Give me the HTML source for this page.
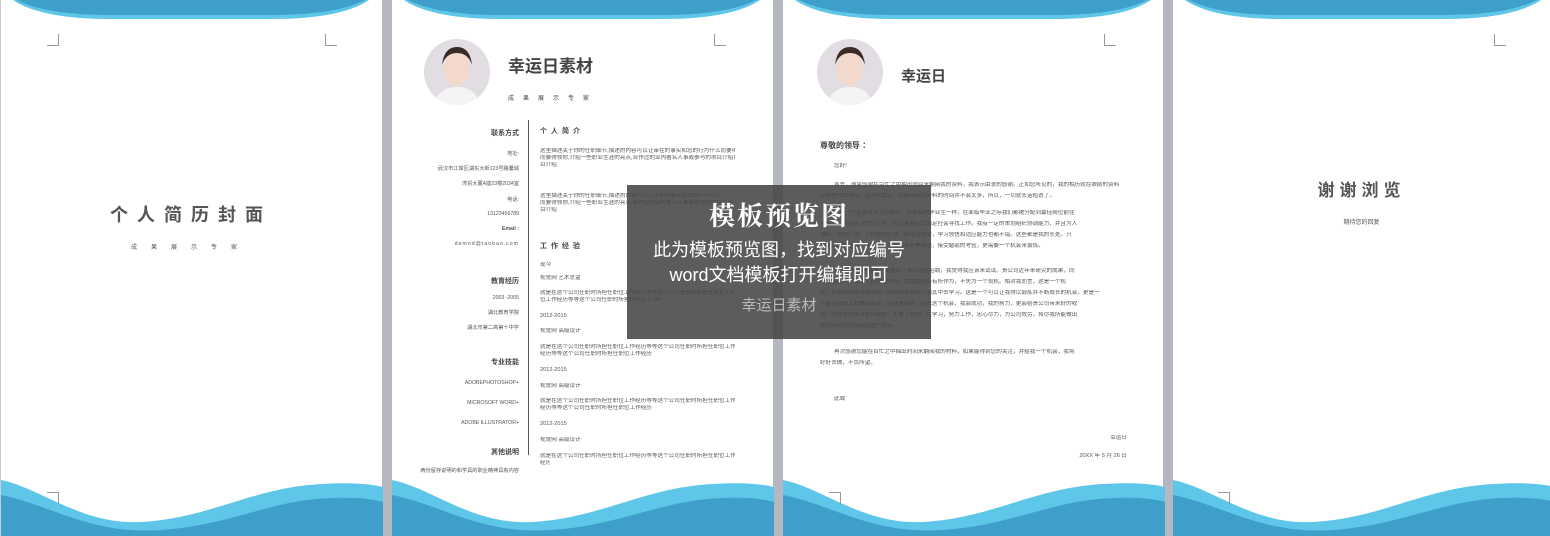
<!DOCTYPE html>
<html><head><meta charset="utf-8">
<style>
*{margin:0;padding:0;box-sizing:border-box}
body{width:1550px;height:536px;overflow:hidden;background:#b4b7bf;position:relative;font-family:"Liberation Sans","Noto Sans CJK SC",sans-serif}
.pg{position:absolute;top:0;height:536px;background:#fff;overflow:hidden}
.a{position:absolute;white-space:nowrap;color:#555}
.s{font-size:5.2px;color:#555}
.l{position:absolute;white-space:nowrap;overflow:hidden;font-size:5.6px;color:#555;line-height:7px}
.cm{position:absolute;width:12px;height:12px;border-color:#999;border-style:solid;border-width:0}
.av{position:absolute;width:66px;height:66px;border-radius:50%;background:#e2dde2;overflow:hidden}
</style></head><body>

<div class="pg" style="left:0;width:382px;border-left:1px solid #ccc"></div>
<div class="pg" style="left:392px;width:381px"></div>
<div class="pg" style="left:783px;width:380px"></div>
<div class="pg" style="left:1173px;width:377px"></div>

<svg width="1550" height="536" style="position:absolute;left:0;top:0" xmlns="http://www.w3.org/2000/svg">
<defs>
<g id="wv">
<path d="M12 0 Q40 19 110 19 L270 19 Q340 19 368 0 Z" fill="#5ec6e8"/>
<path d="M16 0 Q45 15 110 15 L270 15 Q335 15 364 0 Z" fill="#3f9fcb"/>
<path d="M0 480 C40 488 80 525 140 522 C210 518 250 488 320 484 C350 482 370 484 382 487 L382 536 L0 536 Z" fill="#5ec6e8"/>
<path d="M0 495 C50 505 90 535 160 530 C230 525 270 500 330 498 C355 497 372 499 382 502 L382 536 L0 536 Z" fill="#3f9fcb"/>
</g>
</defs>
<use href="#wv" x="1"/>
<use href="#wv" x="392"/>
<use href="#wv" x="783"/>
<use href="#wv" x="1173"/>
</svg>

<div class="cm" style="left:47px;top:34px;border-right-width:1px;border-bottom-width:1px"></div>
<div class="cm" style="left:325px;top:34px;border-left-width:1px;border-bottom-width:1px"></div>
<div class="cm" style="left:47px;top:492px;border-right-width:1px;border-top-width:1px"></div>
<div class="cm" style="left:714px;top:34px;border-left-width:1px;border-bottom-width:1px"></div>
<div class="cm" style="left:1104px;top:34px;border-left-width:1px;border-bottom-width:1px"></div>
<div class="cm" style="left:1494px;top:34px;border-left-width:1px;border-bottom-width:1px"></div>
<div class="cm" style="left:829px;top:492px;border-right-width:1px;border-top-width:1px"></div>
<div class="cm" style="left:1218px;top:492px;border-right-width:1px;border-top-width:1px"></div>

<!-- page 1 -->
<div class="a" style="left:0;width:382px;top:201px;text-align:center;font-size:18px;font-weight:bold;letter-spacing:9px;color:#555">个人简历封面</div>
<div class="a" style="left:0;width:382px;top:242px;text-align:center;font-size:6px;letter-spacing:14px;color:#555">成果展示专家</div>

<!-- page 2 -->
<div class="av" style="left:424px;top:39px">
<svg width="66" height="66"><ellipse cx="33" cy="30" rx="13" ry="17" fill="#f3d9cc"/><path d="M18 26 Q20 8 33 8 Q46 8 48 26 Q44 14 33 14 Q22 14 18 26Z" fill="#3a2a26"/><path d="M10 66 Q14 48 33 48 Q52 48 56 66Z" fill="#f4f4f4"/></svg></div>
<div class="a" style="left:508px;top:52px;font-size:17px;font-weight:bold;color:#444">幸运日素材</div>
<div class="a" style="left:508px;top:93px;font-size:6px;letter-spacing:9px;color:#444">成果展示专家</div>
<div style="position:absolute;left:528px;top:120px;width:1px;height:335px;background:#555"></div>
<div class="a" style="right:1031px;top:128px;font-size:7px;font-weight:bold;color:#444">联系方式</div>
<div class="a s" style="right:1031px;top:150px">地址:</div>
<div class="a s" style="right:1031px;top:165px">武汉市江岸区湖东大街123号路馨城</div>
<div class="a s" style="right:1031px;top:180px">湾贸大厦A座23楼2034室</div>
<div class="a s" style="right:1031px;top:196px">电话:</div>
<div class="a s" style="right:1031px;top:211px">13123456789</div>
<div class="a s" style="right:1031px;top:226px;font-weight:bold">Email :</div>
<div class="a s" style="right:1031px;top:241px;letter-spacing:1px">demod@taobao.com</div>
<div class="a" style="right:1031px;top:276px;font-size:7px;font-weight:bold;color:#444">教育经历</div>
<div class="a s" style="right:1031px;top:295px">2003 -2005</div>
<div class="a s" style="right:1031px;top:309px">湖北教育学院</div>
<div class="a s" style="right:1031px;top:324px">湖北市第二高第十中学</div>
<div class="a" style="right:1031px;top:357px;font-size:7px;font-weight:bold;color:#444">专业技能</div>
<div class="a s" style="right:1031px;top:380px">ADOBEPHOTOSHOP+</div>
<div class="a s" style="right:1031px;top:400px">MICROSOFT WORD+</div>
<div class="a s" style="right:1031px;top:420px">ADOBE ILLUSTRATOR+</div>
<div class="a" style="right:1031px;top:447px;font-size:7px;font-weight:bold;color:#444">其他说明</div>
<div class="a s" style="right:1031px;top:467px">两份留存说明的和学具的职业精神具有内容</div>

<div class="a" style="left:540px;top:126px;font-size:7px;font-weight:bold;letter-spacing:4px;color:#444">个人简介</div>
<div class="l" style="left:540px;top:148px;width:195px">这里描述关于你的任职细节,描述的内容可以让审在的事实和您的行为什么而要得领你,介绍一些职业生涯的亮点,合作过的业内著名人事或参与的项</div>
<div class="l" style="left:540px;top:155px;width:195px">而要得领你,介绍一些职业生涯的亮点,合作过的业内著名人事或参与的项目介绍目介绍</div>
<div class="l" style="left:540px;top:162px;width:20px">目介绍</div>
<div class="l" style="left:540px;top:193px;width:195px">这里描述关于你的任职细节,描述的内容可以让审在的事实和您的行为什么</div>
<div class="l" style="left:540px;top:200px;width:195px">而要得领你,介绍一些职业生涯的亮点,合作过的业内著名人事或参与的项目介绍</div>
<div class="l" style="left:540px;top:207px;width:20px">目介绍</div>
<div class="a" style="left:540px;top:241px;font-size:7px;font-weight:bold;letter-spacing:4px;color:#444">工作经验</div>
<div class="l" style="left:540px;top:262px">现今</div>
<div class="l" style="left:540px;top:275px">视觉网 艺术总监</div>
<div class="l" style="left:540px;top:290px;width:195px">就是在这个公司任职时所担任职位工作经历等等这个公司任职时所担任职位工作</div>
<div class="l" style="left:540px;top:297px;width:120px">位工作经历等等这个公司任职时所担任职位工作经历</div>
<div class="l" style="left:540px;top:313px">2012-2015</div>
<div class="l" style="left:540px;top:328px">视觉网 高级设计</div>
<div class="l" style="left:540px;top:344px;width:195px">就是在这个公司任职时所担任职位工作经历等等这个公司任职时所担任职位工作</div>
<div class="l" style="left:540px;top:351px;width:115px">经历等等这个公司任职时所担任职位工作经历</div>
<div class="l" style="left:540px;top:367px">2012-2015</div>
<div class="l" style="left:540px;top:383px">视觉网 高级设计</div>
<div class="l" style="left:540px;top:398px;width:195px">就是在这个公司任职时所担任职位工作经历等等这个公司任职时所担任职位工作</div>
<div class="l" style="left:540px;top:405px;width:115px">经历等等这个公司任职时所担任职位工作经历</div>
<div class="l" style="left:540px;top:421px">2012-2015</div>
<div class="l" style="left:540px;top:437px">视觉网 高级设计</div>
<div class="l" style="left:540px;top:453px;width:195px">就是在这个公司任职时所担任职位工作经历等等这个公司任职时所担任职位工作</div>
<div class="l" style="left:540px;top:460px;width:10px">经历</div>

<!-- page 3 -->
<div class="av" style="left:817px;top:39px">
<svg width="66" height="66"><ellipse cx="33" cy="30" rx="13" ry="17" fill="#f3d9cc"/><path d="M18 26 Q20 8 33 8 Q46 8 48 26 Q44 14 33 14 Q22 14 18 26Z" fill="#3a2a26"/><path d="M10 66 Q14 48 33 48 Q52 48 56 66Z" fill="#f4f4f4"/></svg></div>
<div class="a" style="left:901px;top:65px;font-size:15px;font-weight:bold;color:#444">幸运日</div>
<div class="a" style="left:820px;top:140px;font-size:8px;font-weight:bold;color:#444">尊敬的领导 ：</div>
<div class="l" style="left:834px;top:163px">您好!</div>
<div class="l" style="left:834px;top:182px;width:293px">首先，诚挚感谢在百忙之中抽出时间来翻阅我的资料，我表示由衷的感谢。正如您所见的，我的相历就在眼前的资料</div>
<div class="l" style="left:820px;top:193px;width:240px">您将是我的伯乐。因为我知道，您翻阅我的资料的时间并不会太多，所以，一切就长话短说了。</div>
<div class="l" style="left:834px;top:210px;width:293px">我是一个应届毕业生的学生，和所有的毕业生一样，在面临毕业之际我们都被分配到最佳岗位前往</div>
<div class="l" style="left:820px;top:221px;width:307px">开创业，就在实习的日子里，所以需要正式踏足社会寻找工作。我有一定的策划组织协调能力，并且为人</div>
<div class="l" style="left:820px;top:232px;width:307px">诚实，自信心强，工作责任心强，能吃苦耐劳，学习领悟和适应能力也都不错。这些都是我的长处。只</div>
<div class="l" style="left:820px;top:243px;width:240px">是缺乏工作经验，我需要一个平台来积累经验，接受磨砺的考验，更需要一个机会来锻炼。</div>
<div class="l" style="left:834px;top:268px;width:293px">其次，诚挚地看好，我看到了贵公司的招聘，我觉得我应该来试试。贵公司近年来研究的成果，同</div>
<div class="l" style="left:820px;top:279px;width:307px">时一直以来都得到了社会的好评，我我相信会有所作为，不失为一个良机。相对我而言，这是一个机</div>
<div class="l" style="left:820px;top:290px;width:307px">会，我相信我能做得更好，所以我愿意融入到其中去学习。这是一个可以让我得以锻炼并不断成长的机会，更是一</div>
<div class="l" style="left:820px;top:301px;width:307px">个能让我向上的舞台机会。而我更相信，给我这个机会，我会成功，我的努力，更会给贵公司带来好的收</div>
<div class="l" style="left:820px;top:312px;width:307px">益。我在各种学习和实践中，积累了经验，在学习，努力工作，忠心尽力，为公司效劳，将尽我所能做出</div>
<div class="l" style="left:820px;top:323px;width:100px">更好的努力和贡献给这个机会。</div>
<div class="l" style="left:834px;top:349px;width:293px">再次感谢您能在百忙之中抽出时间来翻阅我的材料，如果能得到您的关注，并给我一个机会，我将</div>
<div class="l" style="left:820px;top:360px;width:90px">好好去做，不负所望。</div>
<div class="l" style="left:834px;top:396px">此致</div>
<div class="l" style="right:423px;top:435px">幸运日</div>
<div class="l" style="right:423px;top:453px">20XX 年 5 月 26 日</div>

<!-- page 4 -->
<div class="a" style="left:1173px;width:377px;top:176px;text-align:center;font-size:17px;font-weight:bold;letter-spacing:5px;color:#555">谢谢浏览</div>
<div class="a" style="left:1173px;width:377px;top:217px;text-align:center;font-size:6px;color:#555">期待您的回复</div>

<!-- overlay -->
<div style="position:absolute;left:627px;top:185px;width:304px;height:154px;background:rgba(70,70,70,0.88);text-align:center;color:#fff">
<div style="margin-top:11px;font-size:26px;font-weight:bold;letter-spacing:2px;font-family:'Noto Serif CJK SC',serif">模板预览图</div>
<div style="margin-top:5px;font-size:18px;line-height:24px">此为模板预览图，找到对应编号</div>
<div style="font-size:18px;line-height:26px">word文档模板打开编辑即可</div>
<div style="margin-top:6px;font-size:15px;color:#bbb">幸运日素材</div>
</div>
</body></html>
